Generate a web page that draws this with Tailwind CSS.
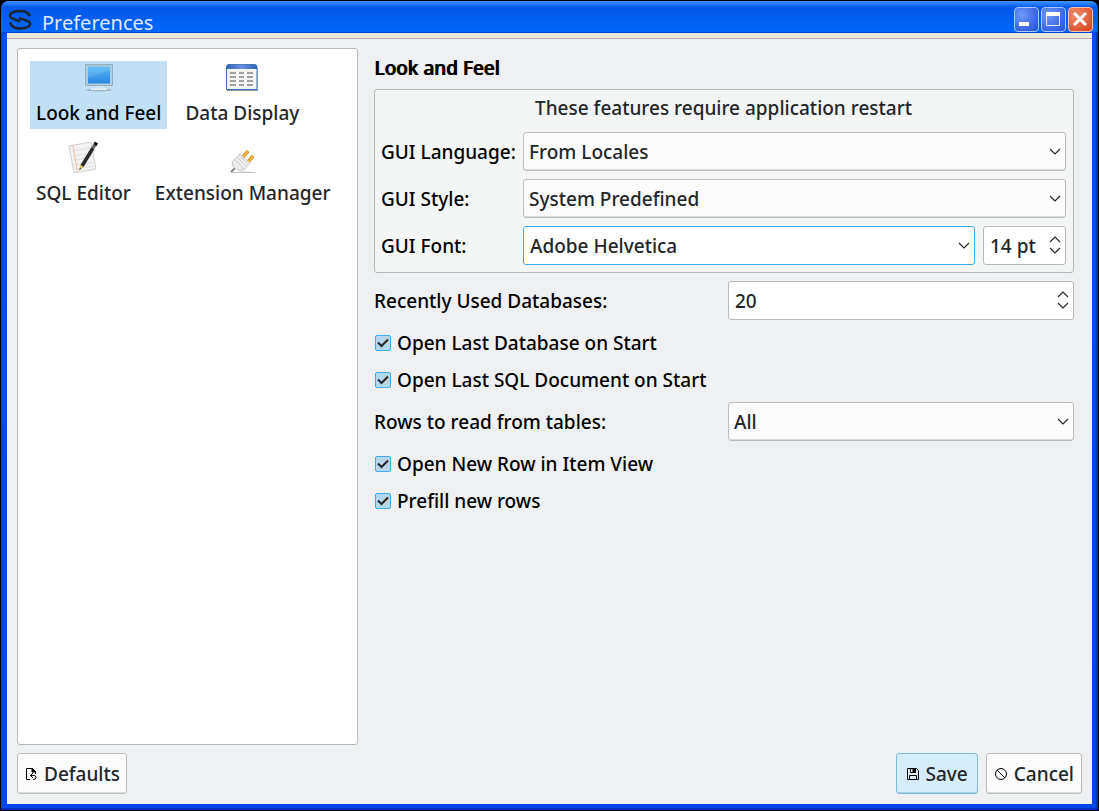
<!DOCTYPE html>
<html lang="en">
<head>
<meta charset="utf-8">
<title>Preferences</title>
<script src="https://cdn.jsdelivr.net/npm/@tailwindcss/browser@4"></script>
</head>
<body class="flex h-screen flex-col bg-black p-px font-['Noto_Sans',sans-serif] text-[19px] leading-[26px] font-medium text-[#232629]">
<div class="flex min-h-0 flex-1 flex-col rounded-t-lg bg-[#0050ee] bg-linear-to-b from-[#0050ee] to-[#0046e8] px-[6px] pb-[6px] shadow-[inset_-2px_-2px_1px_#0a2cc0,inset_1px_0_1px_#0a3cd8]">
  <header class="-mx-[6px] flex h-8 shrink-0 items-center rounded-t-lg bg-linear-to-b from-[#3f96ff] via-[#0057e8] via-20% to-[#0068ff] pr-[5px] pl-[7px] shadow-[inset_0_-1px_0_#0046d8]">
    <svg class="mt-[5px] h-6 w-6" viewBox="0 0 24 24" fill="none" stroke="#1d2430" stroke-width="2.4" aria-hidden="true">
      <path d="M22 8C20.500 4.500 16 3 12 3C6 3 1.800 5 1.800 7.800C1.800 10.500 7 11.500 12 13.500"/>
      <path d="M2 14.500C3.500 19 8 20.500 12 20.500C18 20.500 22.200 18.500 22.200 15.700C22.200 13 17 12 11 10"/>
    </svg>
    <h1 class="ml-[10px] flex-1 pt-[12px] text-[20px] leading-[22px] font-normal text-[#dfe9ff]">Preferences</h1>
    <div class="flex gap-[2px] pt-[5px]">
      <button type="button" aria-label="Minimize" class="h-[25px] w-[25px] rounded-[4px] border border-[#a9c6ff] bg-radial-[at_30%_30%] from-[#6f97f8] to-[#1d4fdc]">
        <svg viewBox="0 0 23 23" class="block" aria-hidden="true"><path d="M4 14h10v4H4z" fill="#fff"/></svg>
      </button>
      <button type="button" aria-label="Maximize" class="h-[25px] w-[25px] rounded-[4px] border border-[#a9c6ff] bg-radial-[at_30%_30%] from-[#6f97f8] to-[#1d4fdc]">
        <svg viewBox="0 0 23 23" class="block" aria-hidden="true"><path d="M4.500 5.500h13v12h-13z" fill="none" stroke="#dfe9ff"/><path d="M4 4h14v4H4z" fill="#fff"/></svg>
      </button>
      <button type="button" aria-label="Close" class="h-[25px] w-[25px] rounded-[4px] border border-[#f6c3b4] bg-radial-[at_30%_30%] from-[#f08a68] to-[#d8401a]">
        <svg viewBox="0 0 23 23" class="block" aria-hidden="true"><path d="M5 5l12 12M17 5L5 17" stroke="#fff" stroke-width="3"/></svg>
      </button>
    </div>
  </header>
  <div class="h-[6px] shrink-0 border-b border-[#b4b4b2] bg-[#ece9d8]"></div>
  <form class="flex min-h-0 flex-1 flex-col gap-2 bg-[#eff0f1] px-[10px] pt-[9px] pb-[10px]">
    <div class="flex min-h-0 flex-1 gap-4 pr-2">
      <nav class="flex w-[341px] shrink-0 flex-wrap content-start gap-3 rounded-[3px] border border-[#b8b9ba] bg-white p-3">
        <button type="button" aria-current="page" class="flex h-[68px] flex-col items-center bg-[#c2e0f5] px-[6px] text-black">
          <svg class="h-8 w-8" viewBox="0 0 32 32" aria-hidden="true">
            <defs><linearGradient id="scr" x1="0" y1="0" x2="0" y2="1"><stop offset="0" stop-color="#58b8f6"/><stop offset="1" stop-color="#2787e0"/></linearGradient></defs>
            <ellipse cx="16" cy="29" rx="13" ry="1.500" fill="#9fb8c6"/>
            <path d="M13 24h6l1 4h-8z" fill="#d5e3ea"/><path d="M8 27.500h16v1.500H8z" fill="#e6eef2"/>
            <path d="M2.500 3.500h27v21h-27z" fill="#b2ccda" stroke="#93b0c0"/>
            <path d="M5 5.500h22v17H5z" fill="url(#scr)"/><path d="M5 5.500h22v4L5 17z" fill="#fff" opacity=".12"/>
          </svg>
          <span class="mt-[7px]">Look and Feel</span>
        </button>
        <button type="button" class="flex h-[68px] flex-col items-center px-[6px]">
          <svg class="h-8 w-8" viewBox="0 0 32 32" aria-hidden="true">
            <defs><linearGradient id="bar"><stop offset="0" stop-color="#2e66b0"/><stop offset=".5" stop-color="#6e90dc"/><stop offset="1" stop-color="#2e66b0"/></linearGradient></defs>
            <path d="M1 29.500h31V7" fill="none" stroke="#8d959c"/>
            <path d="M.5 8V6Q.5 3.500 3 3.500h25.500Q31 3.500 31 6v22.500H.5z" fill="#f2f3f3" stroke="#3a70b4"/>
            <path d="M.5 8V6Q.5 3.500 3 3.500h25.500Q31 3.500 31 6v2z" fill="url(#bar)"/>
            <path d="M4 12h6M13 12h5M21 12h6M4 16h6M13 16h5M21 16h6M4 20h6M13 20h5M21 20h6M4 24h6M13 24h5M21 24h6" stroke="#a2a2a2" stroke-width="2"/>
          </svg>
          <span class="mt-[7px]">Data Display</span>
        </button>
        <button type="button" class="flex h-[68px] flex-col items-center px-[6px]">
          <svg class="h-8 w-8" viewBox="0 0 32 32" aria-hidden="true">
            <path d="M2 5L24 1l5 27L7 32z" fill="#f4f3f2" stroke="#c4c4c2" stroke-width=".8"/>
            <path d="M5 10l18-3M6 15l18-3M7 19l18-3M8 24l18-3M8 28l18-3" stroke="#e0e1e2"/>
            <path d="M6 5l4.500 26" stroke="#f5bfa0" stroke-width="1"/>
            <path d="M15 25l11-18" stroke="#2a2a2a" stroke-width="3.600"/><path d="M26 7l2-3.500" stroke="#666" stroke-width="3.400"/><path d="M28 4l1.500-2.500" stroke="#111" stroke-width="3.600"/>
            <path d="M13.400 24l3.200 2-4.200 3z" fill="#d4bd5a"/><path d="M12.800 27l1.500.8-2 1.700z" fill="#222"/>
          </svg>
          <span class="mt-[7px]">SQL Editor</span>
        </button>
        <button type="button" class="flex h-[68px] flex-col items-center px-[6px]">
          <svg class="h-8 w-8" viewBox="0 0 32 32" aria-hidden="true">
            <ellipse cx="17" cy="32" rx="13" ry="1.500" fill="#c4c4c4"/>
            <path d="M4 31l5-5" stroke="#858585" stroke-width="2"/>
            <path d="M16 16l5-6M21 21l5-6" stroke="#b97c18" stroke-width="3.500"/><path d="M16 16l5-6M21 21l5-6" stroke="#f5b63a" stroke-width="2"/>
            <path d="M13 13l10 9-6 7q-4 1-8-1t-4-7z" fill="#eee" stroke="#bbb" stroke-width=".8"/>
            <path d="M10 16l9 9M8 19l9 9M12 14l9 9" stroke="#c4c4c4" stroke-width=".8"/>
          </svg>
          <span class="mt-[7px]">Extension Manager</span>
        </button>
      </nav>
      <main class="flex min-w-0 flex-1 flex-col text-black">
        <h2 class="mt-[7px] text-shadow-[1px_0_0_#000]">Look and Feel</h2>
        <section class="mt-2 grid grid-cols-[134px_minmax(0,1fr)] items-center gap-2 rounded-[3px] border border-[#b8b9ba] bg-[#f4f5f5] pt-[5px] pr-[7px] pb-[7px] pl-[6px]">
          <p class="col-span-2 pb-[3px] text-center text-[#232629]">These features require application restart</p>
          <label for="lang" class="whitespace-nowrap">GUI Language:</label>
          <div class="relative">
            <select id="lang" class="block h-[39px] w-full appearance-none rounded-[3px] border border-[#bcbdbe] bg-[#fcfcfc] px-[5px] text-[#232629] shadow-[inset_0_-1px_0_#dcdddd]"><option>From Locales</option></select>
            <svg class="pointer-events-none absolute top-[16px] right-[5px] h-[7px] w-3" viewBox="0 0 12 7" fill="none" stroke="#232629" stroke-width="1.200" aria-hidden="true"><path d="M1 1l5 5 5-5"/></svg>
          </div>
          <label for="style">GUI Style:</label>
          <div class="relative">
            <select id="style" class="block h-[39px] w-full appearance-none rounded-[3px] border border-[#bcbdbe] bg-[#fcfcfc] px-[5px] text-[#232629] shadow-[inset_0_-1px_0_#dcdddd]"><option>System Predefined</option></select>
            <svg class="pointer-events-none absolute top-[16px] right-[5px] h-[7px] w-3" viewBox="0 0 12 7" fill="none" stroke="#232629" stroke-width="1.200" aria-hidden="true"><path d="M1 1l5 5 5-5"/></svg>
          </div>
          <label for="font">GUI Font:</label>
          <div class="flex gap-2">
            <div class="relative min-w-0 flex-1">
              <select id="font" class="block h-[39px] w-full appearance-none rounded-[3px] border border-[#3daee9] bg-white px-[6px] text-[#232629]"><option>Adobe Helvetica</option></select>
              <svg class="pointer-events-none absolute top-[16px] right-[5px] h-[7px] w-3" viewBox="0 0 12 7" fill="none" stroke="#232629" stroke-width="1.200" aria-hidden="true"><path d="M1 1l5 5 5-5"/></svg>
            </div>
            <div class="relative w-[83px]">
              <input aria-label="Font size" value="14 pt" class="block h-[39px] w-full rounded-[3px] border border-[#b8b9ba] bg-white px-[6px] text-[#232629]">
              <svg class="pointer-events-none absolute top-[10px] right-[5px] h-[18px] w-3" viewBox="0 0 12 18" fill="none" stroke="#232629" stroke-width="1.200" aria-hidden="true"><path d="M1 6l5-5 5 5M1 12l5 5 5-5"/></svg>
            </div>
          </div>
        </section>
        <div class="mt-2 flex items-center">
          <label for="recent" class="min-w-0 flex-1">Recently Used Databases:</label>
          <div class="relative w-[346px]">
            <input id="recent" value="20" class="block h-[39px] w-full rounded-[3px] border border-[#b8b9ba] bg-white px-[6px] text-[#232629]">
            <svg class="pointer-events-none absolute top-[10px] right-[5px] h-[18px] w-3" viewBox="0 0 12 18" fill="none" stroke="#232629" stroke-width="1.200" aria-hidden="true"><path d="M1 6l5-5 5 5M1 12l5 5 5-5"/></svg>
          </div>
        </div>
        <div class="mt-[10px] mb-[9px] flex flex-col gap-[11px]">
          <label class="flex items-center gap-[6px] pl-px"><span class="relative h-4 w-4"><input type="checkbox" checked class="block h-4 w-4 appearance-none rounded-[2px] border border-[#3daee9] bg-[#b3d8ee]"><svg class="pointer-events-none absolute inset-0" viewBox="0 0 16 16" fill="none" stroke="#232629" stroke-width="2" aria-hidden="true"><path d="M3 7.500l3.500 3.500L13 4.500"/></svg></span>Open Last Database on Start</label>
          <label class="flex items-center gap-[6px] pl-px"><span class="relative h-4 w-4"><input type="checkbox" checked class="block h-4 w-4 appearance-none rounded-[2px] border border-[#3daee9] bg-[#b3d8ee]"><svg class="pointer-events-none absolute inset-0" viewBox="0 0 16 16" fill="none" stroke="#232629" stroke-width="2" aria-hidden="true"><path d="M3 7.500l3.500 3.500L13 4.500"/></svg></span>Open Last SQL Document on Start</label>
        </div>
        <div class="flex items-center">
          <label for="rows" class="min-w-0 flex-1">Rows to read from tables:</label>
          <div class="relative w-[346px]">
            <select id="rows" class="block h-[39px] w-full appearance-none rounded-[3px] border border-[#bcbdbe] bg-[#fcfcfc] px-[5px] text-[#232629] shadow-[inset_0_-1px_0_#dcdddd]"><option>All</option></select>
            <svg class="pointer-events-none absolute top-[16px] right-[5px] h-[7px] w-3" viewBox="0 0 12 7" fill="none" stroke="#232629" stroke-width="1.200" aria-hidden="true"><path d="M1 1l5 5 5-5"/></svg>
          </div>
        </div>
        <div class="mt-[10px] mb-[9px] flex flex-col gap-[11px]">
          <label class="flex items-center gap-[6px] pl-px"><span class="relative h-4 w-4"><input type="checkbox" checked class="block h-4 w-4 appearance-none rounded-[2px] border border-[#3daee9] bg-[#b3d8ee]"><svg class="pointer-events-none absolute inset-0" viewBox="0 0 16 16" fill="none" stroke="#232629" stroke-width="2" aria-hidden="true"><path d="M3 7.500l3.500 3.500L13 4.500"/></svg></span>Open New Row in Item View</label>
          <label class="flex items-center gap-[6px] pl-px"><span class="relative h-4 w-4"><input type="checkbox" checked class="block h-4 w-4 appearance-none rounded-[2px] border border-[#3daee9] bg-[#b3d8ee]"><svg class="pointer-events-none absolute inset-0" viewBox="0 0 16 16" fill="none" stroke="#232629" stroke-width="2" aria-hidden="true"><path d="M3 7.500l3.500 3.500L13 4.500"/></svg></span>Prefill new rows</label>
        </div>
      </main>
    </div>
    <footer class="flex shrink-0 gap-2">
      <button type="button" class="mr-auto flex h-[41px] items-center gap-[6px] rounded-[3px] border border-[#bcbdbe] bg-[#fcfcfc] px-[6px] shadow-[inset_0_-1px_0_#dcdddd]">
        <svg class="h-[14px] w-[14px]" viewBox="0 0 14 14" fill="none" stroke="#000" aria-hidden="true"><path d="M6 12.500H2.500v-11h6l3 3V7"/><path d="M8 1v4h4z" fill="#000"/><path d="M6.500 8.500H10q2 0 2 2t-3 2M9 6L6.500 8.500 9 11"/></svg>
        Defaults
      </button>
      <button type="submit" class="flex h-[41px] items-center gap-[6px] rounded-[3px] border border-[#7fb9da] bg-[#d6ecf8] px-[9px] shadow-[inset_0_-1px_0_#a9cfe4]">
        <svg class="h-[14px] w-[14px]" viewBox="0 0 14 14" fill="none" stroke="#000" aria-hidden="true"><path d="M1.500 1.500h9l2 2v9h-11z"/><path d="M4.500 2v3.500h5V2M3.500 12.500v-4h7v4"/><path d="M7 1.500h2.500v4H7z" fill="#000"/></svg>
        Save
      </button>
      <button type="button" class="flex h-[41px] items-center gap-[6px] rounded-[3px] border border-[#bcbdbe] bg-[#fcfcfc] px-[7px] shadow-[inset_0_-1px_0_#dcdddd]">
        <svg class="h-[14px] w-[14px]" viewBox="0 0 14 14" fill="none" stroke="#000" aria-hidden="true"><circle cx="7" cy="7" r="5.500"/><path d="M3 3l8 8"/></svg>
        Cancel
      </button>
    </footer>
  </form>
</div>
</body>
</html>
